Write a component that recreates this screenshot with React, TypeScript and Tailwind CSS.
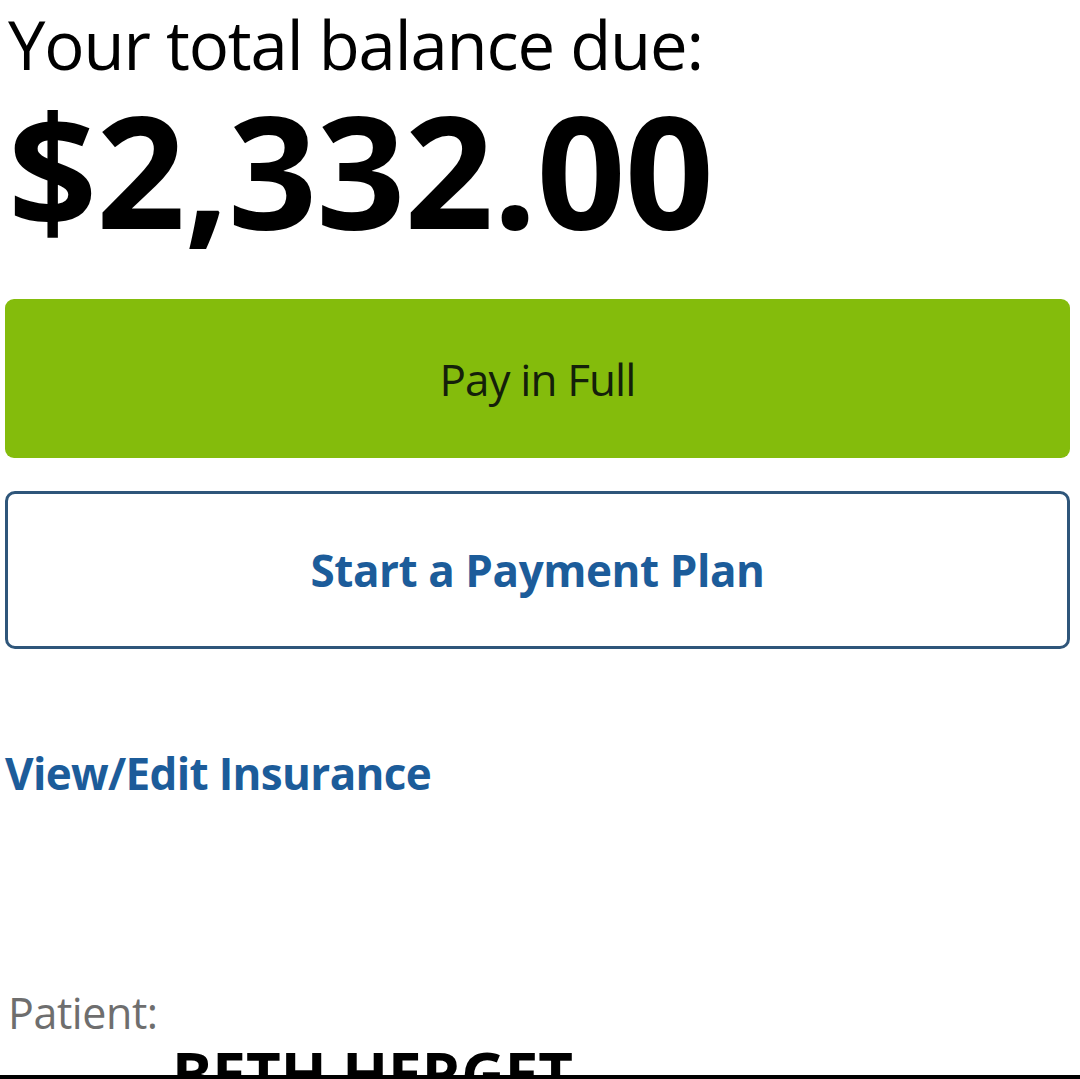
export default function App() {
  return (
    <div className="flex h-[1079px] w-full flex-col overflow-hidden bg-white font-['Open_Sans',sans-serif]">
      <div className="flex flex-col pl-[5px] pr-[10px] pt-[4px]">
        <h2 className="pl-[3px] text-[67px] leading-[1.2] font-normal tracking-[-0.017em] text-black">
          Your total balance due:
        </h2>
        <p className="mt-[7px] pl-[3px] text-[156px] leading-none font-bold tracking-[-0.006em] text-black">
          $2,332.00
        </p>

        <button
          type="button"
          className="mt-[52px] flex h-[159px] w-full items-center justify-center rounded-[9px] bg-[#84bc0c] text-[44px] font-normal tracking-[-0.02em] text-[#14200a]"
        >
          Pay in Full
        </button>

        <button
          type="button"
          className="mt-[33px] flex h-[158px] w-full items-center justify-center rounded-[10px] border-[3px] border-[#2f567a] bg-white text-[44px] font-bold tracking-[-0.01em] text-[#1c5c9a]"
        >
          Start a Payment Plan
        </button>

        <a className="mt-[102px] block text-[44px] leading-none font-bold tracking-[-0.015em] text-[#1c5c9a]">
          View/Edit Insurance
        </a>

        <p className="mt-[196px] pl-[3px] text-[43px] leading-none font-normal tracking-[-0.01em] text-[#6e6e6e]">
          Patient:
        </p>
      </div>

      <div className="mt-auto h-[35px] w-full shrink-0 overflow-hidden border-b-4 border-black">
        <p className="pl-[172px] text-[60px] leading-none font-bold text-black">
          BETH HERGET
        </p>
      </div>
    </div>
  );
}
